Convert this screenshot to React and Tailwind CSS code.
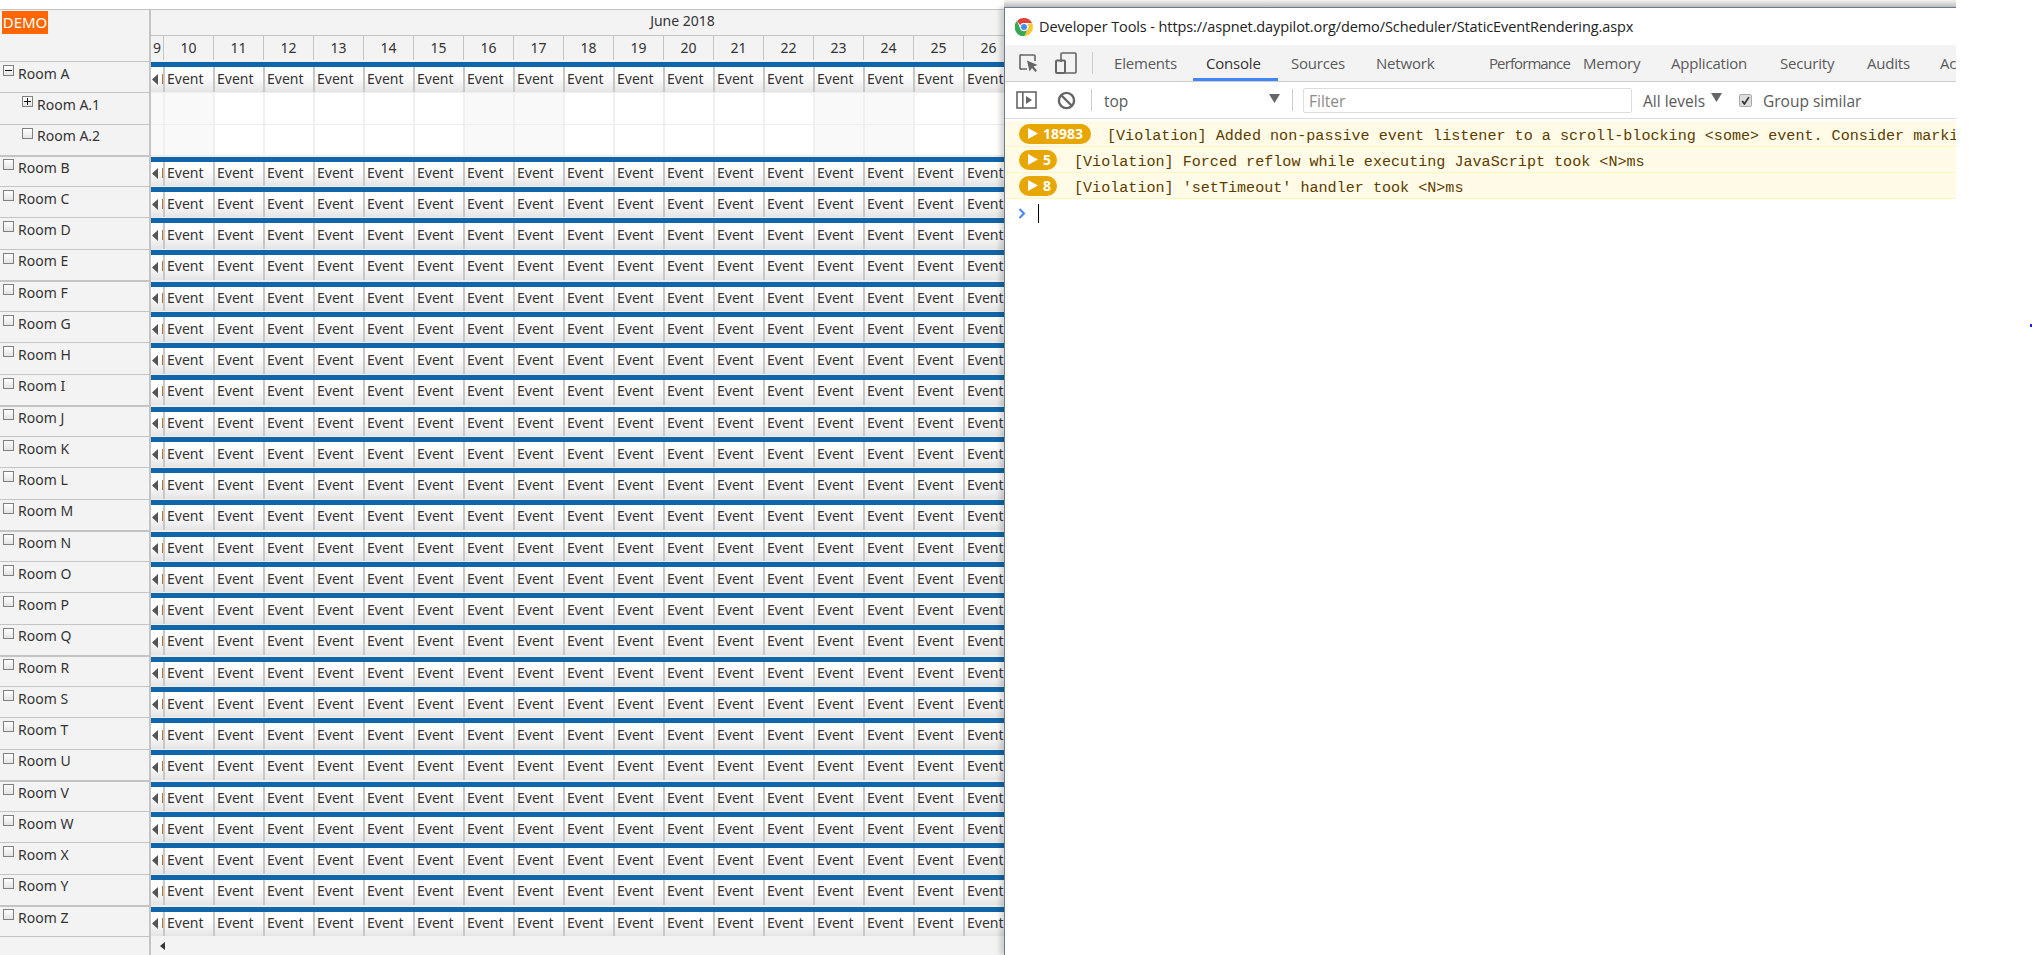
const rooms = [
  { name: 'Room A', icon: 'minus', events: true },
  { name: 'Room A.1', icon: 'plus', indent: true },
  { name: 'Room A.2', indent: true },
  ...'BCDEFGHIJKLMNOPQRSTUVWXYZ'.split('').map((l) => ({ name: `Room ${l}`, events: true })),
]

const days = [10, 11, 12, 13, 14, 15, 16, 17, 18, 19, 20, 21, 22, 23, 24, 25, 26, 27]
const weekend = [16, 17, 23, 24]

const tabs = [
  ['Elements', 'w-[92px]'],
  ['Console', 'w-[85px]'],
  ['Sources', 'w-[85px]'],
  ['Network', 'w-[113px]'],
  ['Performance', 'w-[94px] tracking-[-0.9px]'],
  ['Memory', 'w-[88px]'],
  ['Application', 'w-[109px]'],
  ['Security', 'w-[87px]'],
  ['Audits', 'w-[73px]'],
  ['Ac', 'w-[30px]'],
]

const logs = [
  { count: '18983', badge: 'w-[72px]', gap: 'ml-[16px]', text: "[Violation] Added non-passive event listener to a scroll-blocking <some> event. Consider marking event handler as 'passive'" },
  { count: '5', badge: 'w-[38px]', gap: 'ml-[17px]', text: '[Violation] Forced reflow while executing JavaScript took <N>ms' },
  { count: '8', badge: 'w-[38px]', gap: 'ml-[17px]', text: "[Violation] 'setTimeout' handler took <N>ms" },
]

function ToggleBox({ icon, thick }) {
  return (
    <span className={`flex h-[11px] w-[11px] shrink-0 items-center justify-center self-start border border-[#808080] bg-linear-to-b from-white to-[#e4e4e4] ${thick ? 'mt-[2px]' : 'mt-[3px]'}`}>
      {icon && (
        <svg width="7" height="7" viewBox="0 0 7 7" fill="#111">
          <rect x="0" y="3" width="7" height="1" />
          {icon === 'plus' && <rect x="3" y="0" width="1" height="7" />}
        </svg>
      )}
    </span>
  )
}

function EventCell() {
  return (
    <div className="flex h-full w-[50px] shrink-0 items-center border-l-2 border-[#c8c8c8] bg-linear-to-b from-white from-40% to-[#e4e4e4] pb-[2px] pl-[2px] text-[#333]">
      Event
    </div>
  )
}

function RoomRow({ room, index }) {
  const thick = index % 4 === 3
  return (
    <div className="flex h-[31.25px] shrink-0">
      <div className={`flex w-[149px] shrink-0 items-center border-[#c4c4c4] bg-[#f3f3f3] ${thick ? 'border-t-2' : 'border-t'} ${room.indent ? 'pl-[22px]' : 'pl-[3px]'}`}>
        <ToggleBox icon={room.icon} thick={thick} />
        <span className="ml-[4px] mt-[-7px] text-[#333]">{room.name}</span>
      </div>
      <div className="w-[2px] shrink-0 bg-[#c4c4c4]" />
      <div className={`flex min-w-0 flex-1 flex-col border-[#eeeeee] ${thick ? 'border-t-2' : 'border-t'}`}>
        {room.events ? (
          <>
            <div className="h-[5px] shrink-0 bg-[#1066a8]" />
            <div className="flex min-h-0 flex-1">
              <div className="flex w-[12px] shrink-0 items-center overflow-hidden bg-linear-to-b from-white from-40% to-[#e4e4e4]">
                <svg width="6" height="11" viewBox="0 0 6 11" className="ml-[1px] shrink-0" fill="#555">
                  <path d="M6 0 L0 5.5 L6 11 Z" />
                </svg>
                <span className="ml-[3px] pb-[2px] text-[#333]">Event</span>
              </div>
              {days.map((d) => <EventCell key={d} />)}
            </div>
          </>
        ) : (
          <div className="flex h-full">
            <div className="w-[12px] shrink-0 bg-[#f9f9f9]" />
            {days.map((d) => (
              <div key={d} className={`w-[50px] shrink-0 border-l-2 border-[#f0f0f0] ${d === 10 || weekend.includes(d) ? 'bg-[#f9f9f9]' : 'bg-white'}`} />
            ))}
          </div>
        )}
      </div>
    </div>
  )
}

function Scheduler() {
  return (
    <div className="mt-[9px] flex w-[1004px] flex-col overflow-hidden border-t border-[#c4c4c4] font-['Noto_Sans',sans-serif] text-[14px] leading-none">
      <div className="flex h-[51px] shrink-0">
        <div className="w-[149px] shrink-0 bg-[#f3f3f3] pl-[2px] pt-px">
          <div className="flex h-[23px] w-[46px] items-center justify-center bg-[#ff6600] text-[15px] text-white">DEMO</div>
        </div>
        <div className="w-[2px] shrink-0 bg-[#c4c4c4]" />
        <div className="flex w-[1063px] shrink-0 flex-col bg-[#f3f3f3]">
          <div className="flex h-[25px] shrink-0 items-center justify-center pb-[3px] text-[#333]">June 2018</div>
          <div className="flex flex-1 border-t border-[#c4c4c4] pb-px">
            <div className="flex w-[12px] shrink-0 items-center justify-center overflow-hidden text-[#333]">9</div>
            {days.map((d) => (
              <div key={d} className="flex w-[50px] shrink-0 items-center justify-center border-l border-[#c4c4c4] text-[#333]">{d}</div>
            ))}
          </div>
        </div>
      </div>
      {rooms.map((room, i) => <RoomRow key={room.name} room={room} index={i} />)}
      <div className="flex h-[19px] shrink-0">
        <div className="w-[149px] shrink-0 border-t border-[#c4c4c4] bg-[#f3f3f3]" />
        <div className="w-[2px] shrink-0 bg-[#c4c4c4]" />
        <div className="flex flex-1 items-center bg-[#f3f3f3] pl-[9px]">
          <svg width="5" height="8" viewBox="0 0 5 8" fill="#333"><path d="M5 0 L0 4 L5 8 Z" /></svg>
        </div>
      </div>
    </div>
  )
}

function ChromeLogo() {
  return (
    <svg width="18" height="18" viewBox="0 0 18 18" className="shrink-0">
      <path d="M9 0 A9 9 0 0 1 17 4.9 L9 4.9 A4.1 4.1 0 0 0 5.3 7.3 L2 2.9 A9 9 0 0 1 9 0 Z" fill="#e0433a" />
      <path d="M17 4.9 A9 9 0 0 1 9.5 18 L12.5 11.2 A4.1 4.1 0 0 0 12.6 6 Z" fill="#f7c832" />
      <path d="M2 2.9 A9 9 0 0 0 9.5 18 L12.5 11.2 A4.1 4.1 0 0 1 5.3 10.8 Z" fill="#3aa757" />
      <circle cx="9" cy="9" r="3.9" fill="#fff" />
      <circle cx="9" cy="9" r="3" fill="#4a8bf0" />
    </svg>
  )
}

function DevTools() {
  return (
    <div className="absolute bottom-0 left-[1004px] top-[7px] flex w-[952px] flex-col border-l border-t border-[#6b7b8c] bg-white font-['Open_Sans',sans-serif] shadow-[-4px_0_5px_rgba(0,0,0,0.16)]">
      <div className="absolute left-[-1px] right-0 top-[-8px] h-[7px] bg-linear-to-b from-[#f4f4f4] to-[#bdbdbd]" />
      <div className="flex h-[37px] shrink-0 items-center pl-[10px] text-[14.5px] tracking-[-0.1px] text-[#222]">
        <ChromeLogo />
        <span className="ml-[6px] whitespace-nowrap">Developer Tools - https://aspnet.daypilot.org/demo/Scheduler/StaticEventRendering.aspx</span>
      </div>

      <div className="flex h-[37px] shrink-0 items-center overflow-hidden border-b border-[#cccccc] bg-[#f3f3f3] pl-[14px]">
        <svg width="20" height="20" viewBox="0 0 20 20" fill="none" className="shrink-0">
          <path d="M8 16 H2.5 A1 1 0 0 1 1 15 V3 A1 1 0 0 1 2.5 2 H15 A1 1 0 0 1 16 3 V8" stroke="#666" strokeWidth="1.6" />
          <path d="M8 7.5 L18.5 12 L14.6 13.6 L18 17.5 L16.3 19 L13 15 L10.5 18.5 Z" fill="#666" />
        </svg>
        <svg width="22" height="22" viewBox="0 0 22 22" fill="none" className="ml-[16px] shrink-0">
          <path d="M6 10 V2 A1 1 0 0 1 7 1 H20 A1 1 0 0 1 21 2 V20 A1 1 0 0 1 20 21 H10" stroke="#666" strokeWidth="1.6" />
          <rect x="1" y="8.5" width="9" height="12.5" rx="1" stroke="#666" strokeWidth="2" />
        </svg>
        <div className="ml-[15px] h-[22px] w-px shrink-0 bg-[#cccccc]" />
        <div className="ml-[8px] flex h-full text-[15px] tracking-[-0.2px] text-[#5a5a5a]">
          {tabs.map(([label, w]) => (
            <div key={label} className={`flex h-full shrink-0 items-center whitespace-nowrap pl-[13px] ${w} ${label === 'Console' ? 'border-b-[3px] border-[#4285f4] pt-[4px] text-[#333]' : 'pt-[1px]'}`}>
              {label}
            </div>
          ))}
        </div>
      </div>

      <div className="flex h-[37px] shrink-0 items-center border-b border-[#dddddd] pl-[11px] text-[15.5px] text-[#5a5a5a]">
        <svg width="21" height="18" viewBox="0 0 21 18" fill="none" className="shrink-0">
          <rect x="1" y="1" width="19" height="16" stroke="#666" strokeWidth="1.6" />
          <rect x="6" y="1" width="1.6" height="16" fill="#666" />
          <path d="M10 5 L16 9 L10 13 Z" fill="#666" />
        </svg>
        <svg width="19" height="19" viewBox="0 0 19 19" fill="none" className="ml-[20px] shrink-0">
          <circle cx="9.5" cy="9.5" r="7.6" stroke="#666" strokeWidth="2.4" />
          <path d="M4 4 L15 15" stroke="#666" strokeWidth="2.4" />
        </svg>
        <div className="ml-[15px] h-[22px] w-px shrink-0 bg-[#cccccc]" />
        <span className="ml-[12px] mt-[3px] w-[165px] shrink-0">top</span>
        <svg width="11" height="9" viewBox="0 0 11 9" fill="#666" className="mt-[-4px] shrink-0"><path d="M0 0 H11 L5.5 9 Z" /></svg>
        <div className="ml-[12px] h-[22px] w-px shrink-0 bg-[#cccccc]" />
        <div className="ml-[10px] flex h-[25px] w-[329px] shrink-0 items-center rounded-[2px] border border-[#dddddd] pl-[5px] pt-[3px] text-[#8a8a8a]">Filter</div>
        <span className="ml-[11px] mt-[3px] w-[68px] shrink-0 whitespace-nowrap">All levels</span>
        <svg width="11" height="9" viewBox="0 0 11 9" fill="#666" className="mt-[-5px] shrink-0"><path d="M0 0 H11 L5.5 9 Z" /></svg>
        <span className="ml-[17px] flex h-[13px] w-[13px] shrink-0 items-center justify-center rounded-[2px] border border-[#aaaaaa] bg-[#dddddd]">
          <svg width="9" height="9" viewBox="0 0 8 8" fill="none"><path d="M1 4.5 L3 7 L7 1" stroke="#333" strokeWidth="1.6" /></svg>
        </span>
        <span className="ml-[11px] mt-[3px] shrink-0 whitespace-nowrap">Group similar</span>
      </div>

      <div className="h-[2px] shrink-0" />
      {logs.map((log) => (
        <div key={log.count} className="flex h-[26px] shrink-0 items-center overflow-hidden border-b border-[#fff5c2] bg-[#fffbe6] pl-[14px] font-['Liberation_Mono',monospace] text-[15.1px] text-[#5c3b00]">
          <span className={`flex h-[20px] shrink-0 items-center rounded-full bg-[#e8a600] pl-[9px] font-['Noto_Sans',sans-serif] text-[14px] font-bold text-white ${log.badge}`}>
            <svg width="10" height="11" viewBox="0 0 10 11" fill="#fff" className="mr-[5px] shrink-0"><path d="M0 0 L10 5.5 L0 11 Z" /></svg>
            {log.count}
          </span>
          <span className={`mt-[6px] whitespace-pre ${log.gap}`}>{log.text}</span>
        </div>
      ))}

      <div className="flex items-center pl-[13px] pt-[5px]">
        <svg width="8" height="11" viewBox="0 0 8 11" fill="none"><path d="M1.5 1 L6 5.5 L1.5 10" stroke="#4285f4" strokeWidth="2" /></svg>
        <div className="ml-[12px] h-[19px] w-px bg-black" />
      </div>
    </div>
  )
}

export default function App() {
  return (
    <div className="relative h-[955px] w-[2032px] overflow-hidden bg-white">
      <Scheduler />
      <DevTools />
      {/* stray cursor pixels at the right edge of the capture */}
      <div className="absolute left-[2030px] top-[324px] h-[3px] w-[2px] bg-[#2020e0]" />
    </div>
  )
}
